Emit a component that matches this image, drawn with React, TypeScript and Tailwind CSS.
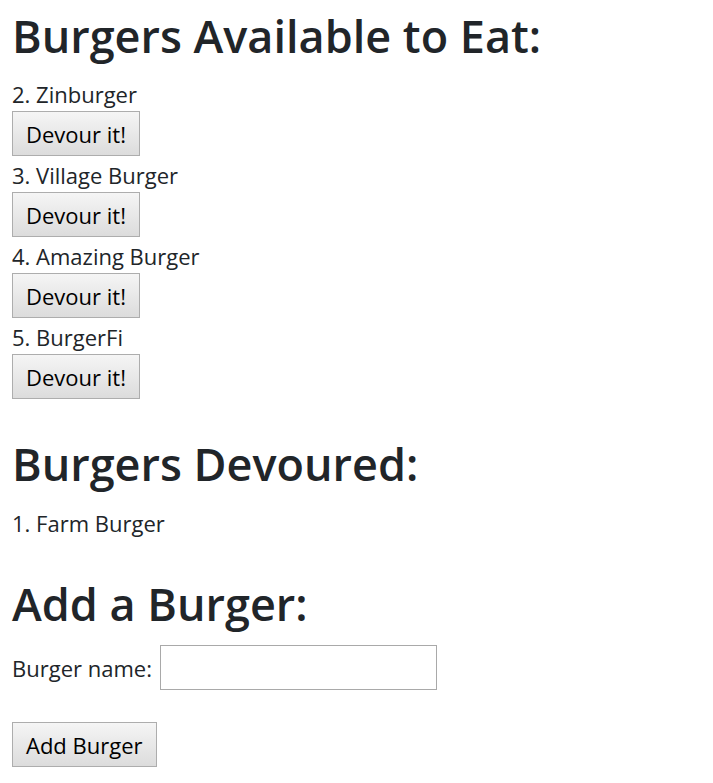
import React from "react";

const burgers = [
  { id: 2, name: "Zinburger" },
  { id: 3, name: "Village Burger" },
  { id: 4, name: "Amazing Burger" },
  { id: 5, name: "BurgerFi" },
];

const devoured = [{ id: 1, name: "Farm Burger" }];

const btn =
  "h-[45px] px-[13px] border border-[#adadad] bg-gradient-to-b from-[#f5f5f5] to-[#dcdcdc] text-black text-[22px] leading-none";

export default function App() {
  return (
    <div
      className="min-h-screen bg-white pl-[12px] text-[#212529]"
      style={{ fontFamily: '"Open Sans", "Noto Sans", sans-serif' }}
    >
      <h1 className="pt-[8px] text-[45px] leading-[56px] font-semibold">
        Burgers Available to Eat:
      </h1>
      <div className="mt-[16px]">
        {burgers.map((b) => (
          <div key={b.id} className="flex flex-col items-start mb-[5px]">
            <div className="h-[30px] text-[22px] leading-[28px]">
              {b.id}. {b.name}
            </div>
            <button className={btn + " mt-px"}>Devour it!</button>
          </div>
        ))}
      </div>

      <h2 className="mt-[37px] text-[45px] leading-[56px] font-semibold">
        Burgers Devoured:
      </h2>
      <div className="mt-[16px]">
        {devoured.map((b) => (
          <div key={b.id} className="h-[30px] text-[22px] leading-[30px]">
            {b.id}. {b.name}
          </div>
        ))}
      </div>

      <h3 className="mt-[38px] text-[45px] leading-[56px] font-semibold">
        Add a Burger:
      </h3>
      <form className="mt-[13px]" onSubmit={(e) => e.preventDefault()}>
        <div className="flex items-center gap-[8px] h-[45px]">
          <label className="text-[22px] leading-[30px]">Burger name:</label>
          <input
            type="text"
            className="w-[277px] h-[45px] border border-[#a9a9a9] bg-white px-2 outline-none"
          />
        </div>
        <button className={btn + " mt-[32px]"}>Add Burger</button>
      </form>
    </div>
  );
}
